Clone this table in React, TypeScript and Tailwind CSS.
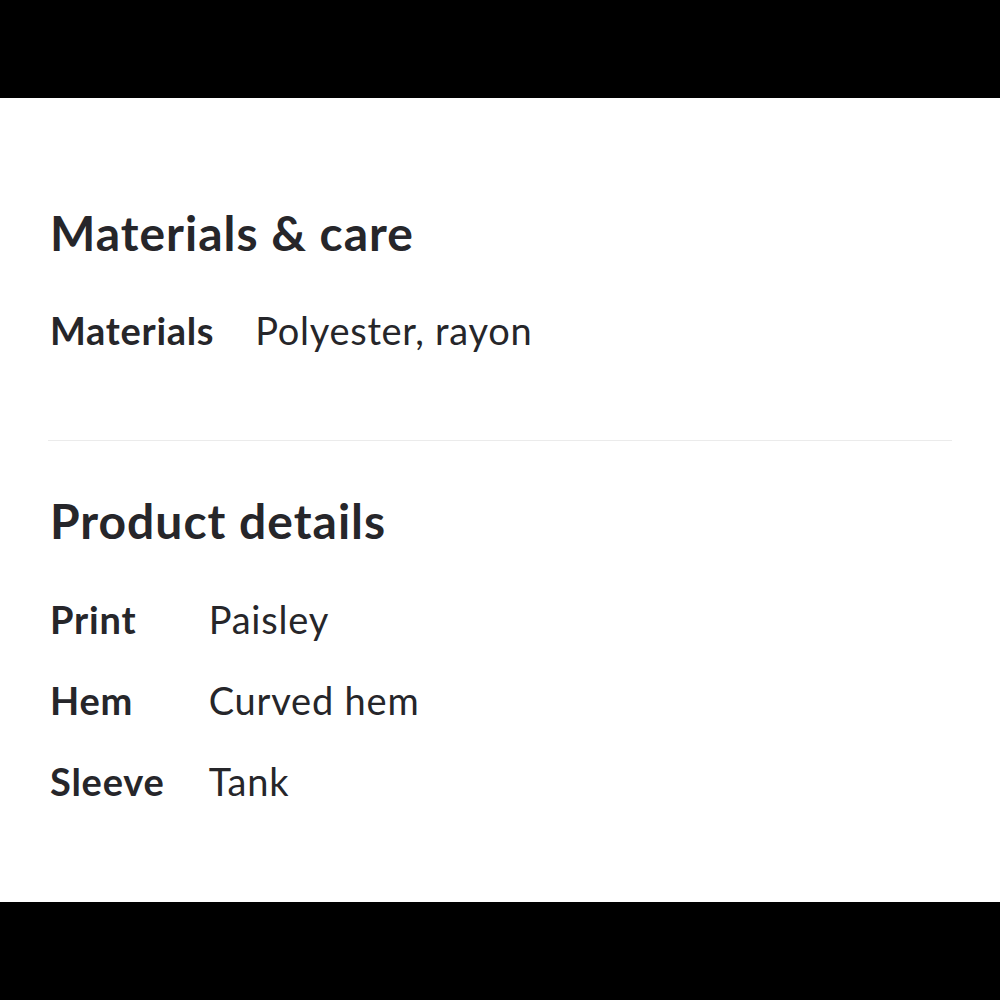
export default function App() {
  const sections = [
    {
      title: "Materials & care",
      rows: [{ label: "Materials", value: "Polyester, rayon" }],
    },
    {
      title: "Product details",
      rows: [
        { label: "Print", value: "Paisley" },
        { label: "Hem", value: "Curved hem" },
        { label: "Sleeve", value: "Tank" },
      ],
    },
  ]

  return (
    <div className="w-[1000px] h-[1000px] bg-black flex flex-col font-['Lato',sans-serif] text-[#26262a]">
      <div className="h-[98px]" />
      <div className="h-[804px] bg-white px-[50px] pt-[107px]">
        {/* Materials */}
        <h2 className="text-[48px] leading-[56px] font-bold tracking-[1px]">{sections[0].title}</h2>
        <div className="mt-[45px] grid grid-cols-[auto_1fr] gap-x-[41px] text-[38px] leading-[48px] tracking-[0.7px]">
          {sections[0].rows.map((r) => (
            <div key={r.label} className="contents">
              <span className="font-bold">{r.label}</span>
              <span>{r.value}</span>
            </div>
          ))}
        </div>

        <div className="mt-[86px] -mx-[2px] h-px bg-[#ebebeb]" />

        {/* Product details */}
        <h2 className="mt-[52px] text-[48px] leading-[56px] font-bold tracking-[1px]">{sections[1].title}</h2>
        <div className="mt-[46px] grid grid-cols-[auto_1fr] gap-x-[44px] gap-y-[33px] text-[38px] leading-[48px] tracking-[0.8px]">
          {sections[1].rows.map((r) => (
            <div key={r.label} className="contents">
              <span className="font-bold">{r.label}</span>
              <span>{r.value}</span>
            </div>
          ))}
        </div>
      </div>
      <div className="h-[98px]" />
    </div>
  )
}
